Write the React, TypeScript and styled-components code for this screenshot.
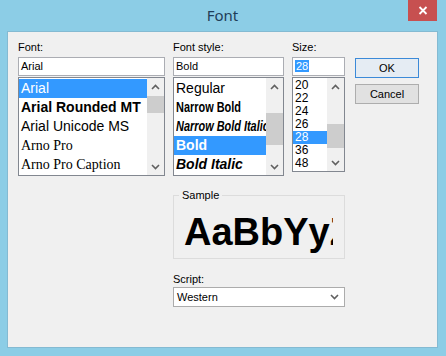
import React from "react";
import styled, { createGlobalStyle } from "styled-components";

const Global = createGlobalStyle`
  html, body { margin: 0; padding: 0; }
  body { background: #8ccde6; font-family: "Liberation Sans", Arial, sans-serif; }
  * { box-sizing: border-box; }
`;

const SANS = `"Liberation Sans", Arial, sans-serif`;
const SERIF = `"Liberation Serif", "Times New Roman", serif`;

const Frame = styled.div`
  width: 446px;
  height: 356px;
  background: #8ccde6;
  display: flex;
  flex-direction: column;
  padding: 0 8px 8px 7px;
`;

const TitleBar = styled.div`
  height: 31px;
  display: grid;
  grid-template-columns: 1fr auto 1fr;
  align-items: start;
`;

const Title = styled.div`
  grid-column: 2;
  padding-top: 5px;
  font-family: "Noto Sans", "Open Sans", sans-serif;
  font-size: 15px;
  line-height: 20px;
  color: #1f3d58;
`;

const CloseButton = styled.div`
  grid-column: 3;
  justify-self: end;
  margin-right: 1px;
  width: 29px;
  height: 21px;
  background: #c75050;
  display: flex;
  align-items: center;
  justify-content: center;
`;

const Client = styled.div`
  flex: 1;
  background: #f0f0f0;
  border: 1px solid #84bad2;
  padding: 9px 0 0 10px;
  display: grid;
  grid-template-columns: 147px 111px 53px 66px;
  grid-template-rows: auto auto auto;
  column-gap: 8px;
  align-content: start;
`;

const Field = styled.div`
  display: flex;
  flex-direction: column;
`;

const Label = styled.div`
  font-size: 11px;
  line-height: 13px;
  color: #000;
  margin-bottom: 3px;
`;

const TextBox = styled.div`
  height: 19px;
  border: 1px solid #abadb3;
  background: #fff;
  font-size: 11px;
  line-height: 17px;
  padding: 0 2px;
  color: #000;
  white-space: nowrap;
`;

const Selected = styled.span`
  display: inline-block;
  background: #3399ff;
  color: #fff;
  line-height: 12px;
  padding: 0 1px;
  margin-top: 2px;
  vertical-align: top;
`;

const List = styled.div<{ $h: number }>`
  margin-top: 1px;
  height: ${(p) => p.$h}px;
  border: 1px solid #828790;
  background: #fff;
  display: flex;
`;

const Items = styled.div`
  flex: 1;
  min-width: 0;
  padding-top: 1px;
  overflow: hidden;
`;

const Item = styled.div<{
  $row: number;
  $size: number;
  $serif?: boolean;
  $bold?: boolean;
  $italic?: boolean;
  $sel?: boolean;
}>`
  height: ${(p) => p.$row}px;
  line-height: ${(p) => p.$row}px;
  padding-left: 2px;
  white-space: nowrap;
  overflow: hidden;
  font-family: ${(p) => (p.$serif ? SERIF : SANS)};
  font-size: ${(p) => p.$size}px;
  font-weight: ${(p) => (p.$bold ? 700 : 400)};
  font-style: ${(p) => (p.$italic ? "italic" : "normal")};
  background: ${(p) => (p.$sel ? "#3399ff" : "transparent")};
  color: ${(p) => (p.$sel ? "#fff" : "#000")};
`;

const Narrow = styled.span`
  display: inline-block;
  transform: scaleX(0.78);
  transform-origin: left center;
`;

const ScrollBar = styled.div`
  width: 17px;
  flex: none;
  background: #f0f0f0;
  display: flex;
  flex-direction: column;
`;

const ArrowBtn = styled.div`
  height: 17px;
  flex: none;
  display: flex;
  align-items: center;
  justify-content: center;
`;

const Track = styled.div`
  flex: 1;
  display: flex;
  flex-direction: column;
`;

const Thumb = styled.div<{ $top: number; $len: number }>`
  margin-top: ${(p) => p.$top}px;
  height: ${(p) => p.$len}px;
  background: #cdcdcd;
`;

const Chevron = ({ up }: { up?: boolean }) => (
  <svg width="9" height="6" viewBox="0 0 9 6">
    <path
      d={up ? "M1 5 L4.5 1.5 L8 5" : "M1 1 L4.5 4.5 L8 1"}
      fill="none"
      stroke="#606060"
      strokeWidth="1.6"
    />
  </svg>
);

const Scroll = ({ top, len }: { top: number; len: number }) => (
  <ScrollBar>
    <ArrowBtn>
      <Chevron up />
    </ArrowBtn>
    <Track>
      <Thumb $top={top} $len={len} />
    </Track>
    <ArrowBtn>
      <Chevron />
    </ArrowBtn>
  </ScrollBar>
);

const Buttons = styled.div`
  margin-left: 2px;
  margin-top: 17px;
  display: flex;
  flex-direction: column;
  gap: 6px;
`;

const Button = styled.div<{ $default?: boolean }>`
  height: 20px;
  border: 1px solid ${(p) => (p.$default ? "#3c8ad8" : "#adadad")};
  background: ${(p) => (p.$default ? "#e5ecf3" : "#e1e1e1")};
  font-size: 11px;
  line-height: 18px;
  text-align: center;
  color: #000;
`;

const Group = styled.fieldset`
  grid-column: 2 / 4;
  margin: 13px 0 0;
  border: 1px solid #dcdcdc;
  padding: 7px 0 3px;
  min-width: 0;
`;

const Legend = styled.legend`
  margin-left: 5px;
  padding: 0 3px;
  font-size: 11px;
  line-height: 13px;
  color: #000;
`;

const SampleText = styled.div`
  margin: 0 11px 0 10px;
  height: 46px;
  line-height: 46px;
  font-size: 38px;
  font-weight: 700;
  white-space: nowrap;
  overflow: hidden;
  color: #000;
`;

const ScriptField = styled(Field)`
  grid-column: 2 / 4;
  margin-top: 14px;
`;

const ScriptLabel = styled(Label)`
  margin-bottom: 1px;
`;

const Combo = styled.div`
  height: 20px;
  border: 1px solid #acacac;
  background: #fff;
  display: flex;
  align-items: center;
  justify-content: space-between;
  padding: 0 5px 0 3px;
  font-size: 11px;
  color: #000;
`;

const fonts = [
  { t: "Arial", sel: true },
  { t: "Arial Rounded MT", bold: true },
  { t: "Arial Unicode MS" },
  { t: "Arno Pro", serif: true },
  { t: "Arno Pro Caption", serif: true },
];

const sizes = ["20", "22", "24", "26", "28", "36", "48"];

export default function App() {
  return (
    <>
      <Global />
      <Frame>
        <TitleBar>
          <Title>Font</Title>
          <CloseButton>
            <svg width="10" height="9" viewBox="0 0 10 9">
              <path d="M1.5 1 L8.5 8 M8.5 1 L1.5 8" stroke="#fff" strokeWidth="1.8" />
            </svg>
          </CloseButton>
        </TitleBar>
        <Client>
          <Field>
            <Label>Font:</Label>
            <TextBox>Arial</TextBox>
            <List $h={99}>
              <Items>
                {fonts.map((f) => (
                  <Item key={f.t} $row={19} $size={14} $serif={f.serif} $bold={f.bold} $sel={f.sel}>
                    {f.t}
                  </Item>
                ))}
              </Items>
              <Scroll top={1} len={17} />
            </List>
          </Field>
          <Field>
            <Label>Font style:</Label>
            <TextBox>Bold</TextBox>
            <List $h={99}>
              <Items>
                <Item $row={19} $size={14}>Regular</Item>
                <Item $row={19} $size={14} $bold>
                  <Narrow>Narrow Bold</Narrow>
                </Item>
                <Item $row={19} $size={14} $bold $italic>
                  <Narrow>Narrow Bold Italic</Narrow>
                </Item>
                <Item $row={19} $size={14} $bold $sel>Bold</Item>
                <Item $row={19} $size={14} $bold $italic>Bold Italic</Item>
              </Items>
              <Scroll top={18} len={32} />
            </List>
          </Field>
          <Field>
            <Label>Size:</Label>
            <TextBox>
              <Selected>28</Selected>
            </TextBox>
            <List $h={95}>
              <Items>
                {sizes.map((s) => (
                  <Item key={s} $row={13} $size={12} $sel={s === "28"}>
                    {s}
                  </Item>
                ))}
              </Items>
              <Scroll top={29} len={24} />
            </List>
          </Field>
          <Buttons>
            <Button $default>OK</Button>
            <Button>Cancel</Button>
          </Buttons>
          <Group>
            <Legend>Sample</Legend>
            <SampleText>AaBbYyZz</SampleText>
          </Group>
          <ScriptField>
            <ScriptLabel>Script:</ScriptLabel>
            <Combo>
              <span>Western</span>
              <Chevron />
            </Combo>
          </ScriptField>
        </Client>
      </Frame>
    </>
  );
}
